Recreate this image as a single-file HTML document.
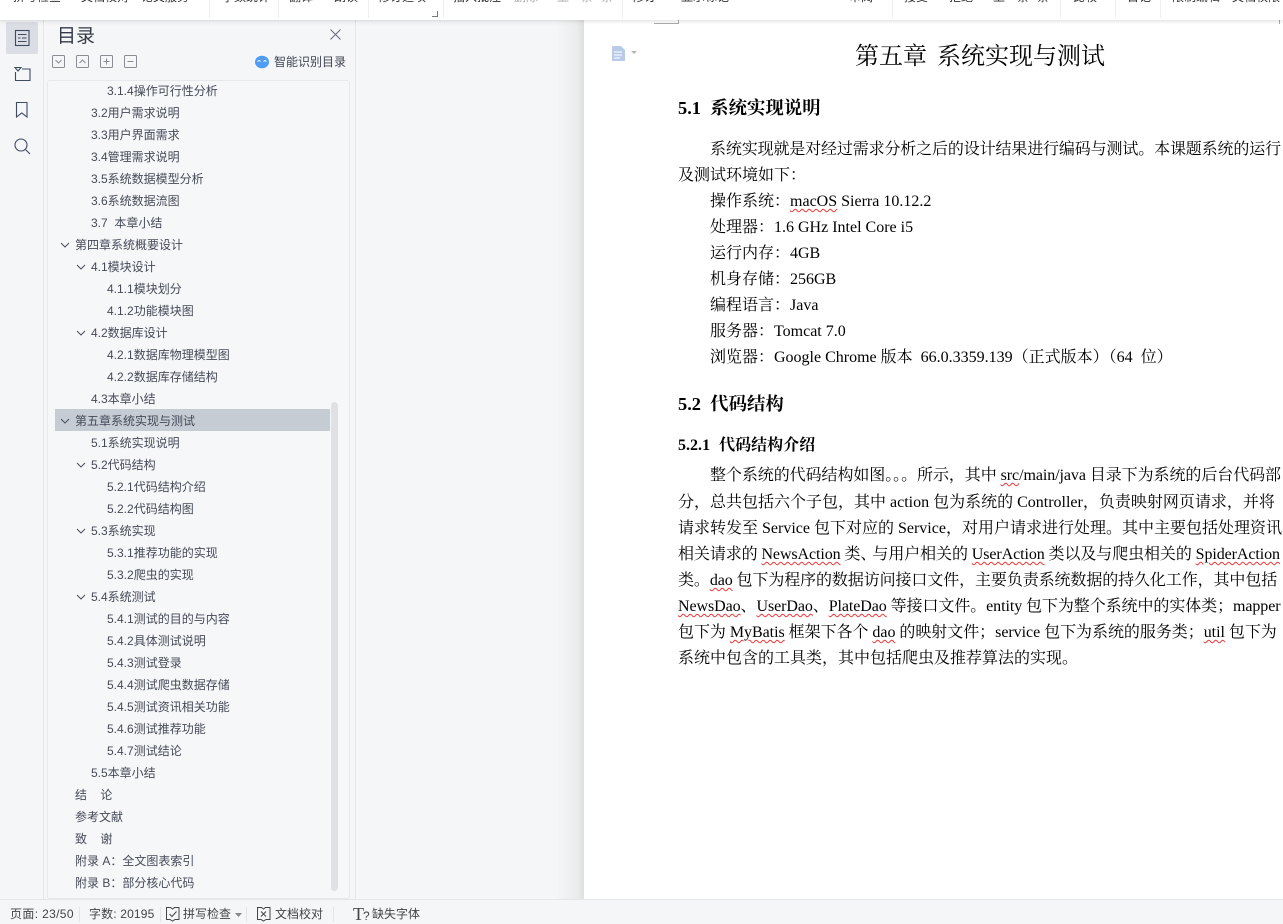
<!DOCTYPE html>
<html lang="zh"><head><meta charset="utf-8"><title>第五章 系统实现与测试</title>
<style>
html,body{margin:0;padding:0;width:1283px;height:924px;overflow:hidden;background:#f5f6f8}
body{position:relative;font-family:"Liberation Sans","Noto Sans CJK SC",sans-serif;font-size:12px;color:#3f4451}
.a{position:absolute;white-space:nowrap}
.tb{position:absolute;top:-10px;line-height:14px;font-size:12px;color:#333;white-space:nowrap}
.tb.g{color:#aaa}
.sep{position:absolute;top:0;width:1px;height:18px;background:#eee}
.r{position:absolute;height:22px;line-height:22px;white-space:nowrap;font-size:12px;color:#454a57}
.l1{left:75px}.l2{left:91px}.l3{left:107px}
.d{position:absolute;white-space:nowrap;font-family:"Liberation Serif","Noto Serif CJK SC",serif;font-size:16px;line-height:26px;height:26px;color:#000}
.w{text-decoration:underline wavy #e33;text-decoration-thickness:1px;text-underline-offset:2px}
.st{position:absolute;top:907px;line-height:15px;font-size:12px;color:#444;white-space:nowrap}
.ss{position:absolute;top:907px;width:1px;height:15px;background:#e2e4e8}
</style></head><body>
<!-- document page -->
<div class="a" style="left:356px;top:20px;width:228px;height:879px;background:linear-gradient(to right,#f5f6f8 0,#f5f6f8 200px,#eceded 220px,#dedfe0 228px)"></div>
<div class="a" style="left:584px;top:20px;width:699px;height:879px;background:#fff"></div>
<div class="a" style="left:654px;top:23px;width:24px;height:1px;background:#aaa"></div>
<div class="a" style="left:678px;top:20px;width:1px;height:4px;background:#aaa"></div>
<div class="a" style="left:1279px;top:20px;width:1px;height:4px;background:#aaa"></div>
<svg class="a" style="left:611px;top:45px" width="28" height="17" viewBox="0 0 28 17"><path d="M1 1h9l4 4v11H1z" fill="#b9cbe8"/><path d="M3 7h8M3 10h8M3 13h6" stroke="#fff"/><path d="M20 6h6l-3 3z" fill="#b5b5b5"/></svg>
<div class="d" style="left:855px;top:40px;height:34px;line-height:34px;font-size:24px">第五章<span style="display:inline-block;width:10px"></span>系统实现与测试</div>
<div class="d" style="left:678px;top:95px;font-size:18.4px;font-weight:bold">5.1&nbsp;&nbsp;系统实现说明</div>
<div class="d" style="left:710px;top:137px;letter-spacing:-.14px">系统实现就是对经过需求分析之后的设计结果进行编码与测试。本课题系统的运行</div>
<div class="d" style="left:678px;top:163px">及测试环境如下：</div>
<div class="d" style="left:710px;top:189px">操作系统：<span class="w">macOS</span> Sierra 10.12.2</div>
<div class="d" style="left:710px;top:215px">处理器：1.6 GHz Intel Core i5</div>
<div class="d" style="left:710px;top:241px">运行内存：4GB</div>
<div class="d" style="left:710px;top:267px">机身存储：256GB</div>
<div class="d" style="left:710px;top:293px">编程语言：Java</div>
<div class="d" style="left:710px;top:319px">服务器：Tomcat 7.0</div>
<div class="d" style="left:710px;top:345px">浏览器：Google Chrome 版本&nbsp;&nbsp;66.0.3359.139（正式版本）（64&nbsp;&nbsp;位）</div>
<div class="d" style="left:678px;top:391px;font-size:18.4px;font-weight:bold">5.2&nbsp;&nbsp;代码结构</div>
<div class="d" style="left:678px;top:433px;font-weight:bold;letter-spacing:.02px">5.2.1<span style="display:inline-block;width:9px"></span>代码结构介绍</div>
<div class="d" style="left:710px;top:463px;letter-spacing:-.07px">整个系统的代码结构如图。。。所示，其中 <span class="w">src</span>/main/java 目录下为系统的后台代码部</div>
<div class="d" style="left:678px;top:490px">分，总共包括六个子包，其中 action 包为系统的 Controller，负责映射网页请求，并将</div>
<div class="d" style="left:678px;top:516px">请求转发至 Service 包下对应的 Service，对用户请求进行处理。其中主要包括处理资讯</div>
<div class="d" style="left:678px;top:542px;letter-spacing:-.09px">相关请求的 <span class="w">NewsAction</span> 类<span style="letter-spacing:-4px">、</span>与用户相关的 <span class="w">UserAction</span> 类以及与爬虫相关的 <span class="w">SpiderAction</span></div>
<div class="d" style="left:678px;top:568px;letter-spacing:-.1px">类。<span class="w">dao</span> 包下为程序的数据访问接口文件，主要负责系统数据的持久化工作，其中包括</div>
<div class="d" style="left:678px;top:594px;letter-spacing:-.08px"><span class="w">NewsDao</span>、<span class="w">UserDao</span>、<span class="w">PlateDao</span> 等接口文件。entity 包下为整个系统中的实体类；mapper</div>
<div class="d" style="left:678px;top:620px;letter-spacing:-.04px">包下为 <span class="w">MyBatis</span> 框架下各个 <span class="w">dao</span> 的映射文件；service 包下为系统的服务类；<span class="w">util</span> 包下为</div>
<div class="d" style="left:678px;top:646px">系统中包含的工具类，其中包括爬虫及推荐算法的实现。</div>

<!-- left rail and panel -->
<div class="a" style="left:43px;top:20px;width:1px;height:879px;background:#e4e6ea"></div>
<div class="a" style="left:355px;top:20px;width:1px;height:879px;background:#e4e6ea"></div>
<div class="a" style="left:6px;top:22px;width:32px;height:32px;border-radius:2px;background:#dadde4"></div>
<svg class="a" style="left:0;top:20px" width="44" height="145" viewBox="0 0 44 145" fill="none" stroke="#3f4a63" stroke-width="1.1">
<rect x="15.5" y="10.5" width="13.500" height="15"/><path d="M18 14.500h8.500M18 18h2.500M22 18h4.500M18 21.500h8.500"/>
<path d="M15.500 52v8.500h14.500V49H22"/><path d="M15 47.500h6l-3 3.500z"/>
<path d="M16.500 82.500h10.500v14.500l-5.250-4-5.250 4z"/>
<circle cx="21" cy="125" r="6"/><path d="M25.500 129.500l4.500 4.500"/>
</svg>
<div class="a" style="left:57px;top:23px;font-size:19px;line-height:27px;color:#353a47">目录</div>
<svg class="a" style="left:329px;top:28px" width="13" height="13" fill="none" stroke="#666c7c"><path d="M1.500 1.500l10 10M11.500 1.500l-10 10"/></svg>
<svg class="a" style="left:50px;top:53px" width="90" height="17" viewBox="0 0 90 17" fill="none" stroke="#8a8d94">
<rect x="2.500" y="2.500" width="12" height="12" rx="1"/><path d="M5.500 7l3 3 3-3"/>
<rect x="26.500" y="2.500" width="12" height="12" rx="1"/><path d="M29.500 10l3-3 3 3"/>
<rect x="50.500" y="2.500" width="12" height="12" rx="1"/><path d="M53.500 8.500h6M56.500 5.500v6"/>
<rect x="74.500" y="2.500" width="12" height="12" rx="1"/><path d="M77.500 8.500h6"/>
</svg>
<svg class="a" style="left:254px;top:55px" width="16" height="14" viewBox="0 0 16 14"><ellipse cx="8" cy="7" rx="7" ry="6.300" fill="#4f9cf5"/><path d="M3.500 6.500l1.500-1 1.500 1M9.500 6.500l1.500-1 1.500 1" stroke="#fff" fill="none"/></svg>
<div class="a" style="left:274px;top:54px;line-height:16px;font-size:12px;color:#3f4451">智能识别目录</div>
<div class="a" style="left:47px;top:80px;width:301px;height:817px;border:1px solid #e6e8ec;border-radius:3px;background:#f6f7f9"></div>
<div class="a" style="left:55px;top:409px;width:275px;height:22px;background:#c5ccd4"></div>
<div class="a" style="left:331px;top:402px;width:7px;height:489px;border-radius:4px;background:#dfe1e4"></div>

<div class="r l3" style="top:80px">3.1.4操作可行性分析</div>
<div class="r l2" style="top:102px">3.2用户需求说明</div>
<div class="r l2" style="top:124px">3.3用户界面需求</div>
<div class="r l2" style="top:146px">3.4管理需求说明</div>
<div class="r l2" style="top:168px">3.5系统数据模型分析</div>
<div class="r l2" style="top:190px">3.6系统数据流图</div>
<div class="r l2" style="top:212px">3.7&nbsp;&nbsp;本章小结</div>
<div class="r l1" style="top:234px">第四章系统概要设计</div>
<div class="r l2" style="top:256px">4.1模块设计</div>
<div class="r l3" style="top:278px">4.1.1模块划分</div>
<div class="r l3" style="top:300px">4.1.2功能模块图</div>
<div class="r l2" style="top:322px">4.2数据库设计</div>
<div class="r l3" style="top:344px">4.2.1数据库物理模型图</div>
<div class="r l3" style="top:366px">4.2.2数据库存储结构</div>
<div class="r l2" style="top:388px">4.3本章小结</div>
<div class="r l1" style="top:410px">第五章系统实现与测试</div>
<div class="r l2" style="top:432px">5.1系统实现说明</div>
<div class="r l2" style="top:454px">5.2代码结构</div>
<div class="r l3" style="top:476px">5.2.1代码结构介绍</div>
<div class="r l3" style="top:498px">5.2.2代码结构图</div>
<div class="r l2" style="top:520px">5.3系统实现</div>
<div class="r l3" style="top:542px">5.3.1推荐功能的实现</div>
<div class="r l3" style="top:564px">5.3.2爬虫的实现</div>
<div class="r l2" style="top:586px">5.4系统测试</div>
<div class="r l3" style="top:608px">5.4.1测试的目的与内容</div>
<div class="r l3" style="top:630px">5.4.2具体测试说明</div>
<div class="r l3" style="top:652px">5.4.3测试登录</div>
<div class="r l3" style="top:674px">5.4.4测试爬虫数据存储</div>
<div class="r l3" style="top:696px">5.4.5测试资讯相关功能</div>
<div class="r l3" style="top:718px">5.4.6测试推荐功能</div>
<div class="r l3" style="top:740px">5.4.7测试结论</div>
<div class="r l2" style="top:762px">5.5本章小结</div>
<div class="r l1" style="top:784px">结&nbsp;&nbsp;&nbsp;&nbsp;论</div>
<div class="r l1" style="top:806px">参考文献</div>
<div class="r l1" style="top:828px">致&nbsp;&nbsp;&nbsp;&nbsp;谢</div>
<div class="r l1" style="top:850px">附录 A：全文图表索引</div>
<div class="r l1" style="top:872px">附录 B：部分核心代码</div>
<svg class="a" style="left:0;top:0" width="100" height="620" fill="none" stroke="#4a4f5c" stroke-width="1">
<path d="M61 243l4 4 4-4M77 265l4 4 4-4M77 331l4 4 4-4M61 419l4 4 4-4M77 463l4 4 4-4M77 529l4 4 4-4M77 595l4 4 4-4"/>
</svg>

<!-- toolbar -->
<div class="a" style="left:0;top:0;width:1283px;height:20px;background:#fff;box-shadow:0 1px 4px rgba(0,0,0,.14)"></div>
<div class="tb" style="left:13px">拼写检查</div>
<div class="tb" style="left:81px">文档校对</div>
<div class="tb" style="left:141px">论文服务</div>
<div class="tb" style="left:222px">字数统计</div>
<div class="tb" style="left:289px">翻译</div>
<div class="tb" style="left:334px">朗读</div>
<div class="tb" style="left:378px">修订选项</div>
<div class="tb" style="left:453px">插入批注</div>
<div class="tb g" style="left:514px">删除</div>
<div class="tb g" style="left:557px">上一条</div>
<div class="tb g" style="left:601px">条</div>
<div class="tb" style="left:632px">修订</div>
<div class="tb" style="left:681px">显示标记</div>
<div class="tb" style="left:849px">审阅</div>
<div class="tb" style="left:904px">接受</div>
<div class="tb" style="left:949px">拒绝</div>
<div class="tb" style="left:993px">上一条</div>
<div class="tb" style="left:1037px">条</div>
<div class="tb" style="left:1073px">比较</div>
<div class="tb" style="left:1127px">日记</div>
<div class="tb" style="left:1172px">限制编辑</div>
<div class="tb" style="left:1232px">文档权限</div>
<div class="sep" style="left:209px"></div><div class="sep" style="left:278px"></div><div class="sep" style="left:368px"></div><div class="sep" style="left:443px"></div><div class="sep" style="left:622px"></div><div class="sep" style="left:892px"></div><div class="sep" style="left:1060px"></div><div class="sep" style="left:1115px"></div><div class="sep" style="left:1160px"></div>
<svg class="a" style="left:432px;top:11px" width="6" height="6" fill="none" stroke="#777"><path d="M5.500 0v5.500H0"/></svg>

<!-- status bar -->
<div class="a" style="left:0;top:899px;width:1283px;height:25px;background:#f5f6f8;border-top:1px solid #e4e6ea;box-sizing:border-box"></div>
<div class="st" style="left:10px;letter-spacing:.35px">页面: 23/50</div>
<div class="ss" style="left:79px"></div>
<div class="st" style="left:89px;letter-spacing:.15px">字数: 20195</div>
<div class="ss" style="left:160px"></div>
<svg class="a" style="left:165px;top:906px" width="16" height="16" fill="none" stroke="#444"><path d="M1.500 1.500h4l2 1.500 2-1.500h4.500v12h-4l-2.500 1.500-2.500-1.500h-3.500z"/><path d="M4.500 8l2.500 2.500 4.500-5"/></svg>
<div class="st" style="left:183px">拼写检查</div>
<svg class="a" style="left:235px;top:913px" width="7" height="4"><path d="M0 0h7l-3.500 4z" fill="#888"/></svg>
<div class="ss" style="left:246px"></div>
<svg class="a" style="left:256px;top:906px" width="16" height="16" fill="none" stroke="#444"><path d="M1.500 1.500h4l2 1.500 2-1.500h4.500v12h-4l-2.500 1.500-2.500-1.500h-3.500z"/><path d="M5 5.500l5 5M10 5.500l-5 5"/></svg>
<div class="st" style="left:275px">文档校对</div>
<div class="ss" style="left:333px"></div>
<div class="a" style="left:353px;top:905px;font-family:'Liberation Serif',serif;font-size:18px;line-height:18px;color:#444">T</div>
<div class="a" style="left:363px;top:909px;font-size:12px;line-height:14px;color:#444">?</div>
<div class="st" style="left:372px">缺失字体</div>
</body></html>
